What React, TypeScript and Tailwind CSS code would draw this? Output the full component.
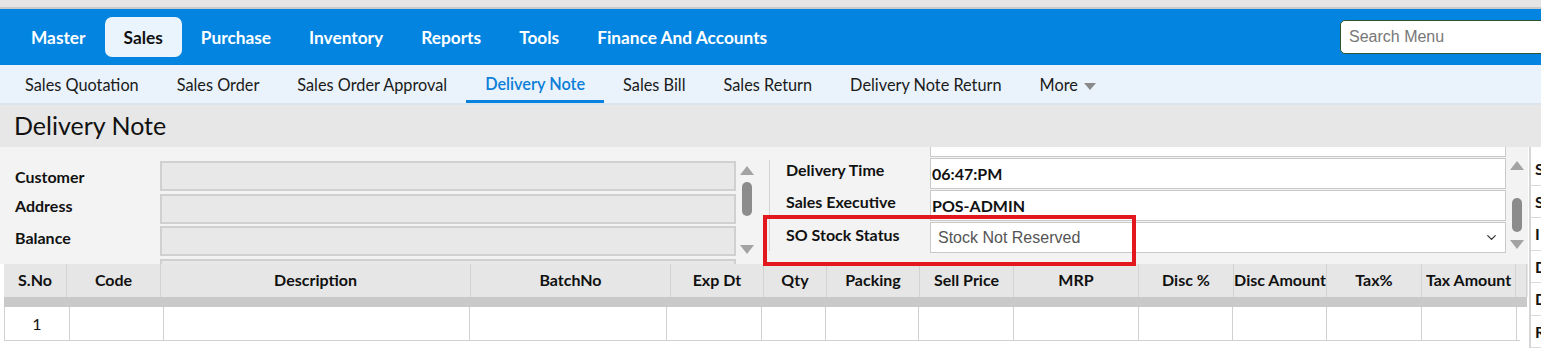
import { ChevronDown } from "lucide-react";

const mainMenu = ["Master", "Sales", "Purchase", "Inventory", "Reports", "Tools", "Finance And Accounts"];
const subMenu = ["Sales Quotation", "Sales Order", "Sales Order Approval", "Delivery Note", "Sales Bill", "Sales Return", "Delivery Note Return"];
const columns = ["S.No", "Code", "Description", "BatchNo", "Exp Dt", "Qty", "Packing", "Sell Price", "MRP", "Disc %", "Disc Amount", "Tax%", "Tax Amount", ""];
const sidePanel = ["S", "S", "I", "D", "D", "R"];
const leftFields = [
  { label: "Customer", cls: "" },
  { label: "Address", cls: "pb-[8px]" },
  { label: "Balance", cls: "pb-[8px]" },
  { label: "", cls: "" },
];

function Scrollbar({ thumbGap }: { thumbGap: string }) {
  return (
    <div className="h-full w-[16px] flex flex-col items-center pt-[4px] pb-[2px]">
      <span className="w-0 h-0 border-x-[7px] border-x-transparent border-b-[9px] border-b-[#a3a3a3]" />
      <span className={`w-[10px] h-[34px] rounded-full bg-[#8c8c8c] ${thumbGap}`} />
      <span className="mt-auto w-0 h-0 border-x-[7px] border-x-transparent border-t-[9px] border-t-[#a3a3a3]" />
    </div>
  );
}

export default function App() {
  return (
    <div className="relative w-[1541px] h-[355px] overflow-hidden bg-white font-['Lato',sans-serif] text-[#111]">
      {/* top strip */}
      <div className="h-[9px] bg-[#e5e5e5] border-b-2 border-[#c9c9c9]" />

      {/* main menu */}
      <nav className="h-[56px] bg-[#0284e0] flex items-center pl-3">
        {mainMenu.map((m) => (
          <div
            key={m}
            className={`h-[40px] px-[19px] pt-[2px] flex items-center text-[17.3px] font-bold rounded-[7px] ${
              m === "Sales" ? "bg-[#eaf4fd] text-[#111]" : "text-white"
            }`}
          >
            {m}
          </div>
        ))}
        <div className="ml-auto mr-[-19px] shrink-0 w-[220px] h-[34px] rounded-[5px] border border-[#2d5530] bg-white flex items-center pl-[8px] font-['Liberation_Sans',Arial,sans-serif] text-[16px] text-[#777]">
          Search Menu
        </div>
      </nav>

      {/* sub menu */}
      <div className="h-[40px] bg-[#eaf3fb] border-b-2 border-[#dde4ec] flex pl-[6px]">
        {subMenu.map((s) => (
          <div
            key={s}
            className={`h-[38px] px-[19px] flex items-center text-[16.3px] ${
              s === "Delivery Note"
                ? "text-[#0a7ed8] font-semibold border-b-[3px] border-[#0a82e0] pt-[4px]"
                : "text-[#1a1a1a] pt-[2px]"
            }`}
          >
            {s}
          </div>
        ))}
        <div className="h-[38px] px-[19px] pt-[2px] flex items-center gap-[6px] text-[16.3px] text-[#1a1a1a]">
          More
          <span className="w-0 h-0 border-x-[6px] border-x-transparent border-t-[7px] border-t-[#8a8a8a] mt-[2px]" />
        </div>
      </div>

      {/* page header */}
      <div className="h-[42px] bg-[#e7e7e7] flex items-center pl-[14px] text-[25px] text-[#111]">
        Delivery Note
      </div>

      <div className="flex">
        <div className="w-[1528px]">
          {/* form */}
          <div className="h-[117px] bg-[#f3f3f3] flex overflow-hidden">
            <div className="w-[760px] shrink-0 flex pl-[15px] pt-[14px]">
              <div className="w-[722px] flex flex-col">
                {leftFields.map((f, i) => (
                  <div key={i} className="h-[32.5px] flex shrink-0">
                    <div className={`w-[145px] text-[16px] font-bold flex items-center ${f.cls}`}>{f.label}</div>
                    <div className="w-[576px] h-[30px] bg-[#e8e8e8] border-2 border-[#d0d0d0]" />
                  </div>
                ))}
              </div>
              <div className="h-[94px] ml-[2px] mt-[1px]">
                <Scrollbar thumbGap="mt-[7px]" />
              </div>
            </div>
            <div className="flex border-l border-[#d3d3d3] my-[13px] ml-[9px]">
              <div className="flex flex-col mt-[-34px] pl-4">
                {[
                  ["", ""],
                  ["Delivery Time", "06:47:PM"],
                  ["Sales Executive", "POS-ADMIN"],
                ].map(([l, v], i) => (
                  <div key={i} className="h-[32px] flex shrink-0">
                    <div className="w-[144px] text-[16px] font-bold">{l}</div>
                    <div className="w-[576px] h-[31px] bg-white border border-[#c9c9c9] flex items-center pl-[1px] text-[16px] font-bold text-[#111]">
                      {v}
                    </div>
                  </div>
                ))}
                <div className="h-[32px] flex shrink-0">
                  <div className="w-[144px] text-[16px] font-bold pt-[1px]">SO Stock Status</div>
                  <div className="w-[576px] h-[31px] bg-white border border-[#c9c9c9] flex items-center justify-between pl-[7px] pr-[6px] font-['Liberation_Sans',Arial,sans-serif] text-[16px] text-[#555]">
                    Stock Not Reserved
                    <ChevronDown size={15} strokeWidth={2} className="text-[#333]" />
                  </div>
                </div>
              </div>
              <div className="h-[94px] ml-[3px] mt-[-3px]">
                <Scrollbar thumbGap="mt-[28px]" />
              </div>
            </div>
          </div>

          {/* grid */}
          <div className="pl-[4px]">
            <div className="grid grid-cols-[63px_94px_310px_200px_93px_63px_93px_94px_125px_95px_93px_95px_94px_11px] bg-[#e6e6e6] h-[33px]">
              {columns.map((c, i) => (
                <div
                  key={i}
                  className="flex items-center justify-center text-[16px] font-bold whitespace-nowrap overflow-hidden border-r border-[#d3d3d3] pb-[1px]"
                >
                  {c}
                </div>
              ))}
            </div>
            <div className="h-[10px] bg-[#c9c9c9] w-[1523px]" />
            <div className="grid grid-cols-[65px_94px_306px_197px_95px_64px_93px_95px_125px_94px_94px_95px_95px] h-[34px] border-b border-l border-[#d0d0d0] w-[1516px]">
              {columns.slice(0, 13).map((_, i) => (
                <div key={i} className="flex items-center justify-center text-[16px] border-r border-[#d0d0d0]">
                  {i === 0 ? "1" : ""}
                </div>
              ))}
            </div>
          </div>
        </div>

        {/* side panel */}
        <div className="flex-1 border-l-2 border-[#d6d6d6] ml-[1px] bg-white pt-[6px] overflow-hidden">
          {sidePanel.map((p, i) => (
            <div key={i} className="h-[32.5px] border-b border-[#dadada] pl-[4px] text-[16px] font-bold whitespace-nowrap pt-[4px]">
              {p}
            </div>
          ))}
        </div>
      </div>

      {/* highlight */}
      <div className="absolute left-[763px] top-[215px] w-[373px] h-[51px] border-[4px] border-[#e3171e]" />
    </div>
  );
}
